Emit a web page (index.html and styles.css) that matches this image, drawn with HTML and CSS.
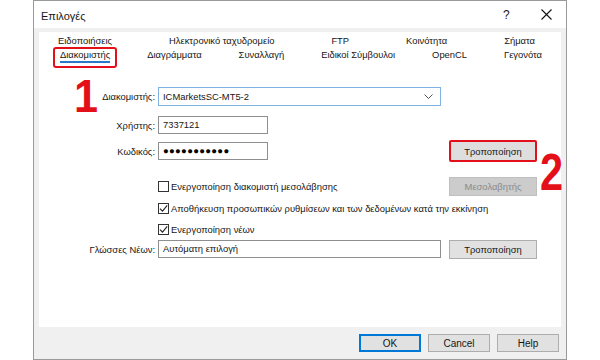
FILE: index.html
```html
<!DOCTYPE html>
<html lang="el">
<head>
<meta charset="utf-8">
<title>Επιλογές</title>
<link rel="stylesheet" href="styles.css">
</head>
<body>
<div class="dialog">
  <div class="titlebar">
    <span class="title">Επιλογές</span>
    <span class="help">?</span>
    <span class="close">
      <svg width="11" height="11" viewBox="0 0 11 11"><path d="M0.5 0.5 L10.5 10.5 M10.5 0.5 L0.5 10.5" stroke="#111" stroke-width="1.1" fill="none"/></svg>
    </span>
  </div>
  <div class="body">
    <div class="panel">
      <div class="tabs">
        <div class="tabrow tabrow-top">
          <span class="tab">Ειδοποιήσεις</span>
          <span class="tab">Ηλεκτρονικό ταχυδρομείο</span>
          <span class="tab">FTP</span>
          <span class="tab">Κοινότητα</span>
          <span class="tab">Σήματα</span>
        </div>
        <div class="tabrow tabrow-bottom">
          <span class="tab tab-active"><span class="tab-label">Διακομιστής</span></span>
          <span class="tab">Διαγράμματα</span>
          <span class="tab">Συναλλαγή</span>
          <span class="tab">Ειδικοί Σύμβουλοι</span>
          <span class="tab">OpenCL</span>
          <span class="tab">Γεγονότα</span>
        </div>
      </div>

      <div class="form">
        <div class="row row-server">
          <span class="label">Διακομιστής:</span>
          <div class="field">
            <div class="combo">
              <span class="combo-text">ICMarketsSC-MT5-2</span>
              <svg class="chevron" width="9" height="5" viewBox="0 0 9 5"><path d="M0.5 0.5 L4.5 4.5 L8.5 0.5" stroke="#555" stroke-width="1" fill="none"/></svg>
            </div>
          </div>
        </div>
        <div class="row row-user">
          <span class="label">Χρήστης:</span>
          <div class="field">
            <div class="input input-short">7337121</div>
          </div>
        </div>
        <div class="row row-pass">
          <span class="label">Κωδικός:</span>
          <div class="field">
            <div class="input input-short input-pass">●●●●●●●●●●●</div>
          </div>
          <div class="btn btn-marked">Τροποποίηση</div>
        </div>
        <div class="row row-cb1">
          <span class="label"></span>
          <div class="field">
            <span class="checkbox"></span>
            <span class="cb-text">Ενεργοποίηση διακομιστή μεσολάβησης</span>
          </div>
          <div class="btn btn-disabled">Μεσολαβητής</div>
        </div>
        <div class="row row-cb2">
          <span class="label"></span>
          <div class="field field-wide">
            <span class="checkbox checked"><svg width="9" height="9" viewBox="0 0 9 9"><path d="M1 4.6 L3.5 7.2 L8.2 1.4" stroke="#222" stroke-width="1.1" fill="none"/></svg></span>
            <span class="cb-text">Αποθήκευση προσωπικών ρυθμίσεων και των δεδομένων κατά την εκκίνηση</span>
          </div>
        </div>
        <div class="row row-cb3">
          <span class="label"></span>
          <div class="field">
            <span class="checkbox checked"><svg width="9" height="9" viewBox="0 0 9 9"><path d="M1 4.6 L3.5 7.2 L8.2 1.4" stroke="#222" stroke-width="1.1" fill="none"/></svg></span>
            <span class="cb-text">Ενεργοποίηση νέων</span>
          </div>
        </div>
        <div class="row row-lang">
          <span class="label">Γλώσσες Νέων:</span>
          <div class="field">
            <div class="input input-long">Αυτόματη επιλογή</div>
          </div>
          <div class="btn">Τροποποίηση</div>
        </div>
      </div>
    </div>

    <div class="buttonbar">
      <div class="btn btn-bar btn-default">OK</div>
      <div class="btn btn-bar">Cancel</div>
      <div class="btn btn-bar">Help</div>
    </div>
  </div>

  <div class="mark mark-1">1</div>
  <div class="mark mark-2">2</div>
</div>
</body>
</html>
```

FILE: styles.css
```css
* {
  box-sizing: border-box;
}

html, body {
  margin: 0;
  padding: 0;
  background: #ffffff;
}

body {
  width: 600px;
  height: 360px;
  overflow: hidden;
  font-family: "Liberation Sans", Arial, sans-serif;
  font-size: 9.4px;
  color: #161616;
}

.dialog {
  position: relative;
  width: 534px;
  height: 360px;
  margin: 0 auto;
  border: 1px solid #9a9a9a;
  background: #f0f0f0;
  display: flex;
  flex-direction: column;
}

.titlebar {
  height: 27px;
  background: #ffffff;
  display: flex;
  align-items: center;
  padding-left: 7px;
  flex: none;
}

.title {
  font-size: 11px;
  flex: 1;
  margin-top: 2px;
}

.help {
  font-size: 12px;
  width: 10px;
  margin-right: 28px;
  margin-top: 1px;
}

.close {
  display: flex;
  width: 11px;
  height: 11px;
  margin-right: 14px;
}

.body {
  flex: 1;
  display: flex;
  flex-direction: column;
}

.panel {
  margin: 4px 5px 0;
  height: 295px;
  background: #ffffff;
  flex: none;
}

/* tabs */
.tabs {
  padding-top: 2px;
}

.tabrow {
  display: flex;
  justify-content: space-between;
  align-items: flex-start;
  height: 14px;
  line-height: 14px;
}

.tabrow-top {
  padding: 0 26px 0 19px;
}

.tabrow-bottom {
  padding: 0 19px 0 21px;
}

.tab {
  white-space: nowrap;
}

.tab-active {
  border: 2px solid #e3101a;
  border-radius: 3px;
  padding: 0 5px 3px;
  margin: -1px -7px -6px;
}

.tab-label {
  display: block;
  line-height: 12px;
  border-bottom: 2px solid #2a78c8;
}

/* form */
.form {
  margin-top: 25px;
  display: flex;
  flex-direction: column;
}

.row {
  display: flex;
  align-items: center;
  height: 18px;
}

.row-server { height: 19px; }
.row-user { margin-top: 10px; }
.row-pass { margin-top: 8px; }
.row-cb1 { margin-top: 17px; }
.row-cb2 { margin-top: 4px; }
.row-cb3 { margin-top: 3px; }
.row-lang { margin-top: 2px; }

.label {
  width: 116px;
  margin-right: 3px;
  text-align: right;
  white-space: nowrap;
  flex: none;
}

.field {
  width: 283px;
  height: 100%;
  margin-right: 8px;
  display: flex;
  align-items: center;
  flex: none;
}

.field-wide {
  width: auto;
}

.combo {
  width: 283px;
  height: 19px;
  border: 1px solid #7fb1e3;
  display: flex;
  align-items: center;
  padding: 0 7px 0 4px;
  background: #fff;
}

.combo-text {
  flex: 1;
}

.chevron {
  display: block;
}

.input {
  height: 18px;
  border: 1px solid #8f8f8f;
  background: #fff;
  padding: 0 4px;
  line-height: 16px;
  white-space: nowrap;
}

.input-short {
  width: 110px;
}

.input-long {
  width: 283px;
}

.input-pass {
  font-size: 9.5px;
  letter-spacing: 0.3px;
  line-height: 16px;
  color: #000;
}

.checkbox {
  width: 11px;
  height: 11px;
  border: 1px solid #333;
  background: #fff;
  display: flex;
  align-items: center;
  justify-content: center;
  flex: none;
  margin-right: 2px;
}

.checkbox svg {
  display: block;
}

.cb-text {
  white-space: nowrap;
}

.btn {
  width: 88px;
  height: 19px;
  background: #e1e1e1;
  border: 1px solid #adadad;
  display: flex;
  align-items: center;
  justify-content: center;
  white-space: nowrap;
  flex: none;
}

.btn-marked {
  height: 22px;
  border: 2px solid #e3101a;
  border-radius: 2px;
  background: #dedede;
}

.btn-disabled {
  background: #cccccc;
  border-color: #bfbfbf;
  color: #8a8a8a;
}

.buttonbar {
  display: flex;
  justify-content: flex-end;
  gap: 7px;
  padding: 7px 7px 0 0;
}

.btn-bar {
  width: 62px;
  height: 18px;
  font-size: 10px;
}

.btn-default {
  border: 1px solid #0078d7;
  box-shadow: inset 0 0 0 1px #0078d7;
}

/* annotation numerals */
.mark {
  position: absolute;
  font-family: "Liberation Sans", Arial, sans-serif;
  font-weight: bold;
  color: #e3101a;
  line-height: 1;
  transform-origin: left top;
}

.mark-1 {
  font-size: 47px;
  left: 40px;
  top: 71px;
  transform: scaleX(0.92);
}

.mark-2 {
  font-size: 52px;
  left: 506px;
  top: 145px;
  transform: scaleX(0.8);
}
```
